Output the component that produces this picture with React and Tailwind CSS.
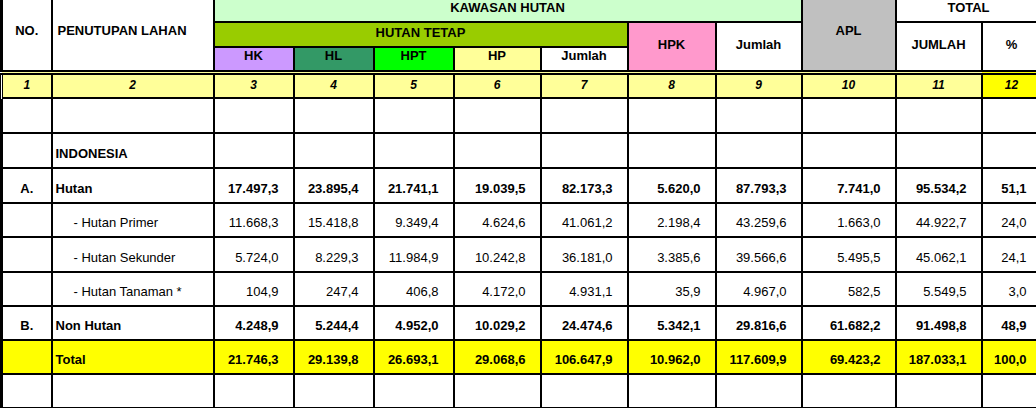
import React from "react";

const widths = [50, 162, 80, 80, 80, 87, 87, 88, 86, 94, 86, 60];

const rows = [
  { h: "h-[35px]", vals: [] },
  { h: "h-[35px]", label: "INDONESIA", bold: true, vals: [] },
  {
    h: "h-[35px]",
    no: "A.",
    label: "Hutan",
    bold: true,
    vals: ["17.497,3", "23.895,4", "21.741,1", "19.039,5", "82.173,3", "5.620,0", "87.793,3", "7.741,0", "95.534,2", "51,1"],
  },
  {
    h: "h-[34px]",
    label: "- Hutan Primer",
    sub: true,
    vals: ["11.668,3", "15.418,8", "9.349,4", "4.624,6", "41.061,2", "2.198,4", "43.259,6", "1.663,0", "44.922,7", "24,0"],
  },
  {
    h: "h-[35px]",
    label: "- Hutan Sekunder",
    sub: true,
    vals: ["5.724,0", "8.229,3", "11.984,9", "10.242,8", "36.181,0", "3.385,6", "39.566,6", "5.495,5", "45.062,1", "24,1"],
  },
  {
    h: "h-[34px]",
    label: "- Hutan Tanaman *",
    sub: true,
    vals: ["104,9", "247,4", "406,8", "4.172,0", "4.931,1", "35,9", "4.967,0", "582,5", "5.549,5", "3,0"],
  },
  {
    h: "h-[34px]",
    no: "B.",
    label: "Non Hutan",
    bold: true,
    vals: ["4.248,9", "5.244,4", "4.952,0", "10.029,2", "24.474,6", "5.342,1", "29.816,6", "61.682,2", "91.498,8", "48,9"],
  },
  {
    h: "h-[34px]",
    label: "Total",
    bold: true,
    total: true,
    vals: ["21.746,3", "29.139,8", "26.693,1", "29.068,6", "106.647,9", "10.962,0", "117.609,9", "69.423,2", "187.033,1", "100,0"],
  },
  { h: "h-[34px]", vals: [] },
];

const td = "border-2 border-black p-0";

const App = () => {
  return (
    <div className="w-[1036px] h-[408px] overflow-hidden bg-white font-['Liberation_Sans',Arial,sans-serif] text-black">
      <table className="table-fixed border-collapse w-[1040px] text-[13px] leading-[15px]">
        <colgroup>
          {widths.map((w, i) => (
            <col key={i} style={{ width: w }} />
          ))}
        </colgroup>
        <thead className="font-bold">
          <tr className="h-[22px]">
            <th rowSpan={3} className={`${td} border-t-0 border-l-[3px] align-middle text-center pb-2 font-bold`}>
              NO.
            </th>
            <th rowSpan={3} className={`${td} border-t-0 align-middle text-left pl-[5px] pb-2 font-bold`}>
              PENUTUPAN LAHAN
            </th>
            <th colSpan={7} className={`${td} border-t-0 bg-[#ccffcc] align-top text-center font-bold`}>
              KAWASAN HUTAN
            </th>
            <th rowSpan={3} className={`${td} border-t-0 bg-[#c0c0c0] align-middle text-center pb-2 font-bold`}>
              APL
            </th>
            <th colSpan={2} className={`${td} border-t-0 align-top text-center font-bold`}>
              TOTAL
            </th>
          </tr>
          <tr className="h-[25px]">
            <th colSpan={5} className={`${td} bg-[#99cc00] align-top text-center pt-[2px] font-bold`}>
              HUTAN TETAP
            </th>
            <th rowSpan={2} className={`${td} bg-[#ff99cc] align-middle text-center pb-1 font-bold`}>
              HPK
            </th>
            <th rowSpan={2} className={`${td} align-middle text-center pb-1 font-bold`}>
              Jumlah
            </th>
            <th rowSpan={2} className={`${td} align-middle text-center pb-1 font-bold`}>
              JUMLAH
            </th>
            <th rowSpan={2} className={`${td} align-middle text-center pb-1 font-bold`}>
              %
            </th>
          </tr>
          <tr className="h-[25px]">
            <th className={`${td} bg-[#cc99ff] align-top text-center font-bold`}>HK</th>
            <th className={`${td} bg-[#339966] align-top text-center font-bold`}>HL</th>
            <th className={`${td} bg-[#00ff00] align-top text-center font-bold`}>HPT</th>
            <th className={`${td} bg-[#ffff99] align-top text-center font-bold`}>HP</th>
            <th className={`${td} align-top text-center font-bold`}>Jumlah</th>
          </tr>
        </thead>
        <tbody>
          <tr className="h-[26px] text-[12px] font-bold italic">
            {Array.from({ length: 12 }, (_, i) => (
              <td
                key={i}
                className={`${td} border-t-[5px] border-double text-center align-middle ${
                  i === 11 ? "bg-[#ffff00]" : "bg-[#ffff99]"
                } ${i === 0 ? "border-l-[3px]" : ""}`}
              >
                {i + 1}
              </td>
            ))}
          </tr>
          {rows.map((r, ri) => (
            <tr key={ri} className={`${r.h} ${r.total ? "bg-[#ffff00]" : ""} ${r.bold ? "font-bold" : ""}`}>
              <td className={`${td} border-l-[3px] text-center align-middle pt-[5px]`}>{r.no}</td>
              <td className={`${td} align-middle pt-[5px] ${r.sub ? "pl-[21px]" : "pl-[3px]"}`}>{r.label}</td>
              {Array.from({ length: 10 }, (_, i) => (
                <td key={i} className={`${td} text-right align-middle pt-[5px] pr-[14px]`}>
                  {r.vals[i] || ""}
                </td>
              ))}
            </tr>
          ))}
        </tbody>
      </table>
    </div>
  );
};

export default App;
